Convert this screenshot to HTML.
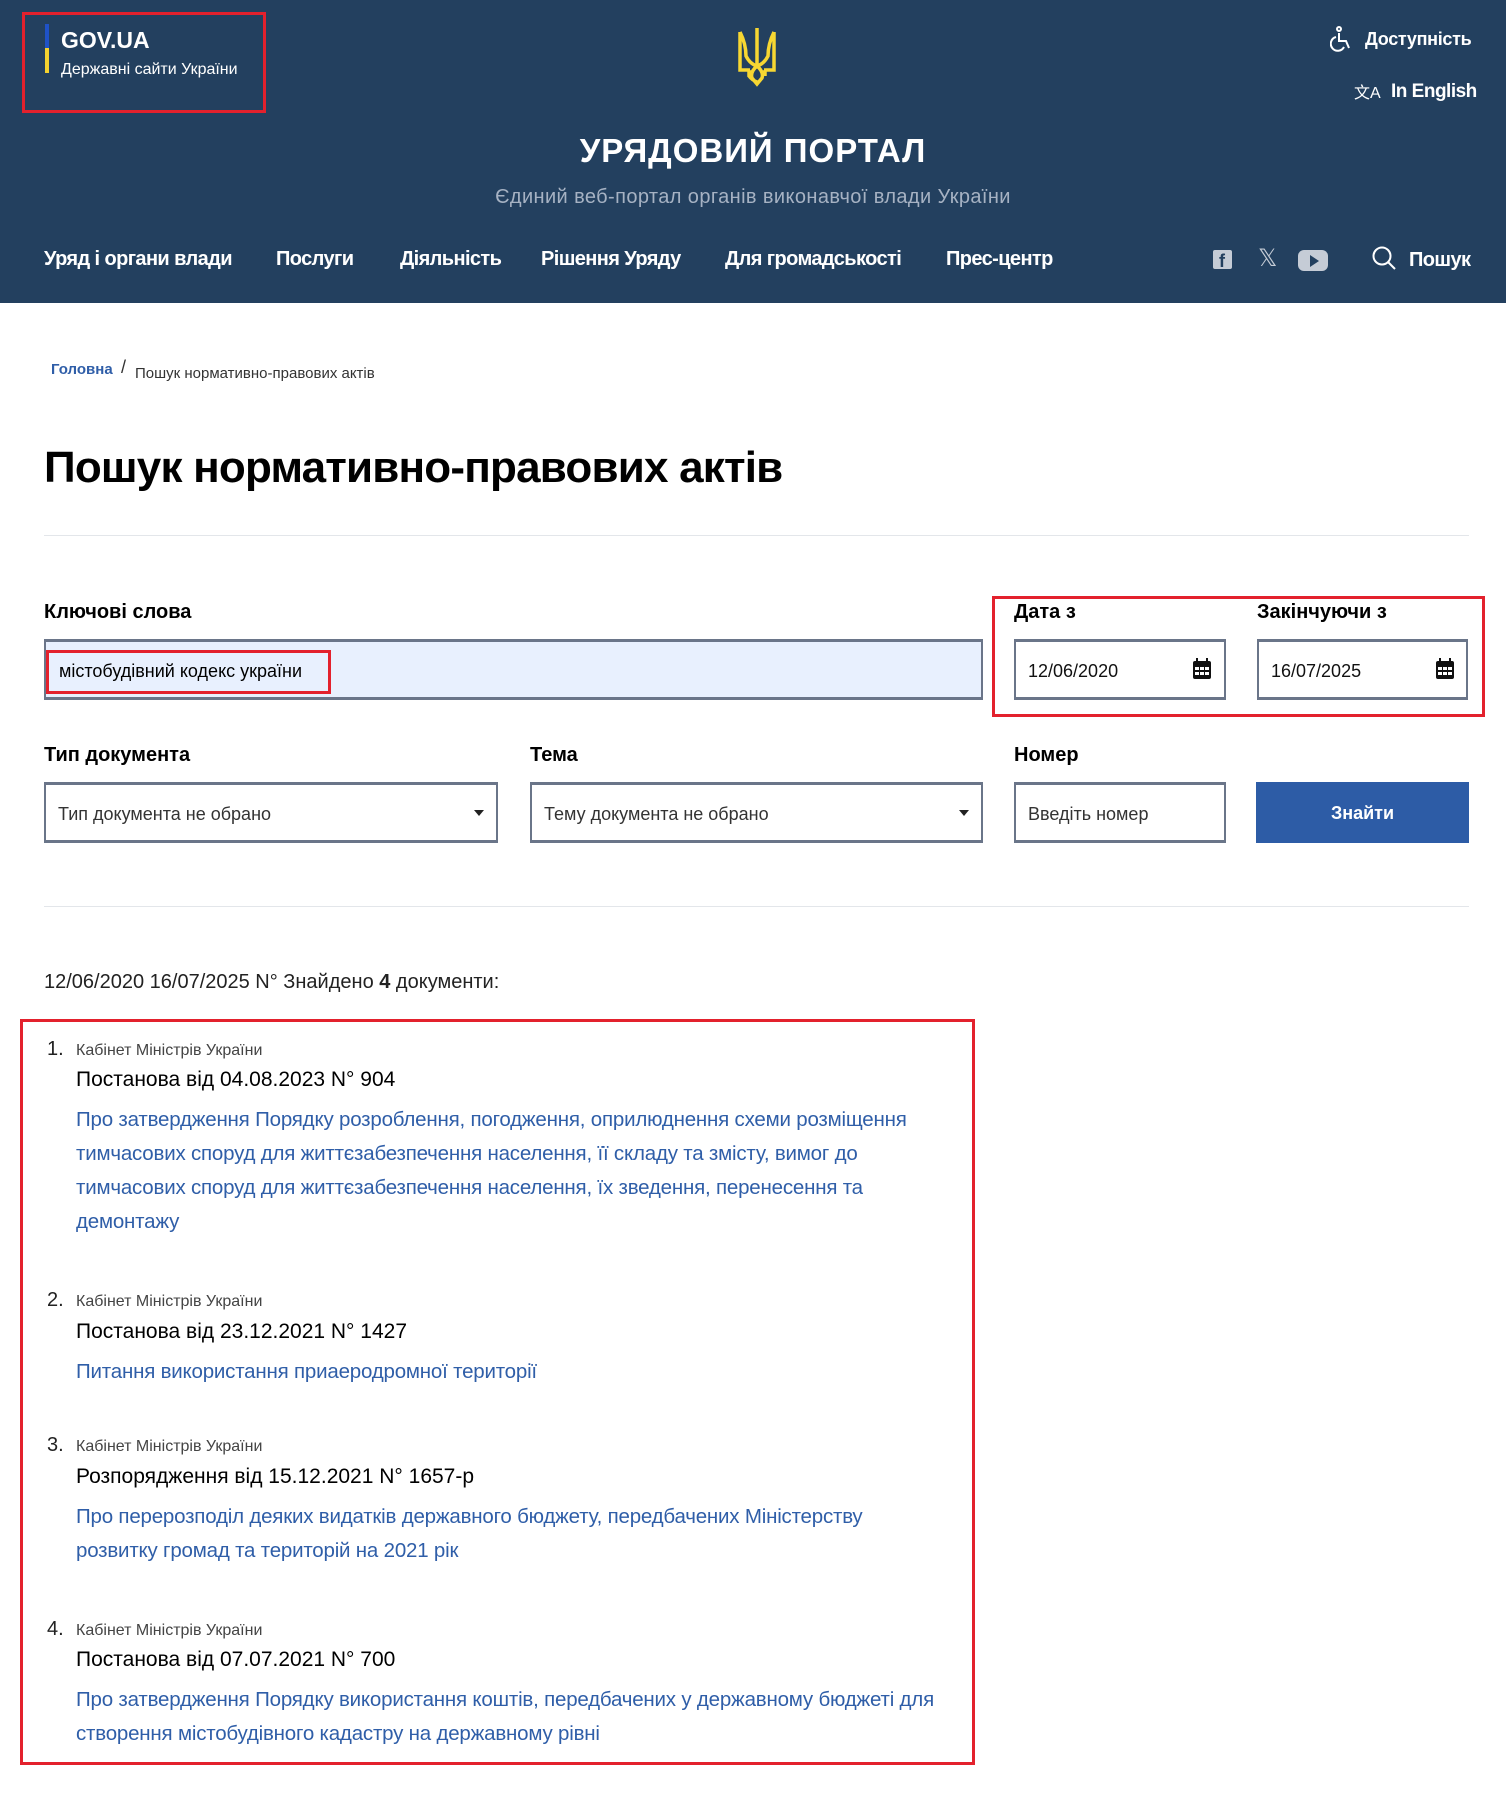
<!DOCTYPE html>
<html><head><meta charset="utf-8"><style>
*{margin:0;padding:0;box-sizing:border-box}
body{width:1506px;height:1805px;background:#fff;font-family:"Liberation Sans","DejaVu Sans",sans-serif;color:#000;position:relative;overflow:hidden}
.a{position:absolute;white-space:nowrap}
header{position:absolute;left:0;top:0;width:1506px;height:303px;background:#23405f}
.nav{top:248px;font-size:20px;font-weight:bold;color:#fff;letter-spacing:-0.6px}
.lbl{font-size:20px;font-weight:bold}
.box{position:absolute;border:2px solid #6a7589;border-top-width:3px;border-bottom-width:3px;background:#fff}
.red{position:absolute;border:3px solid #e3212d}
.ph{font-size:18px;color:#333;position:absolute;left:12px;top:19px;white-space:nowrap}
.org{font-size:16px;color:#444}
.ttl{font-size:21px;color:#000}
.lnk{font-size:20.5px;color:#2f5ea8;line-height:34px;letter-spacing:-0.2px}
.num{font-size:20px;color:#222}
</style></head><body>
<header>
<div class="red" style="left:22px;top:12px;width:244px;height:101px"></div>
<div class="a" style="left:45px;top:24px;width:4px;height:24px;background:#1f52c7"></div>
<div class="a" style="left:45px;top:48px;width:4px;height:25px;background:#f4d22f"></div>
<div class="a" style="left:61px;top:27px;font-size:23px;font-weight:bold;color:#fff">GOV.UA</div>
<div class="a" style="left:61px;top:61px;font-size:16px;color:#fff">Державні сайти України</div>
<svg class="a" style="left:736px;top:26px" width="42" height="62" viewBox="0 0 42 62" fill="none" stroke="#f7d732" stroke-width="3.5">
<path d="M21 2 L21 40 M4 6 L4 44 L14 44 M38 6 L38 44 L28 44 M4 6 Q10 18 10 30 Q14 38 21 40 Q28 38 32 30 Q32 18 38 6 M21 40 Q14 46 16 52 L21 58 L26 52 Q28 46 21 40 M13 44 L13 50 Q16 54 21 56 M29 44 L29 50"/></svg>
<svg class="a" style="left:1330px;top:26px" width="22" height="26" viewBox="0 0 22 26" fill="none" stroke="#fff" stroke-width="2"><circle cx="9" cy="3" r="2"/><path d="M9 7 L9 15 L16 15 L19 22 M6 11 A7 7 0 1 0 14 21"/></svg>
<div class="a" style="left:1365px;top:29px;font-size:18px;font-weight:bold;color:#fff;letter-spacing:-0.3px">Доступність</div>
<div class="a" style="left:1354px;top:79px;font-size:16px;color:#fff">文A</div>
<div class="a" style="left:1391px;top:81px;font-size:19px;font-weight:bold;color:#fff;letter-spacing:-0.5px">In English</div>
<div class="a" style="left:0;width:1506px;text-align:center;top:132px;font-size:33px;font-weight:bold;color:#fff;letter-spacing:1px">УРЯДОВИЙ ПОРТАЛ</div>
<div class="a" style="left:0;width:1506px;text-align:center;top:186px;font-size:20px;color:#a6b2c3;letter-spacing:0.4px">Єдиний веб-портал органів виконавчої влади України</div>
<div class="a nav" style="left:44px">Уряд і органи влади</div>
<div class="a nav" style="left:276px">Послуги</div>
<div class="a nav" style="left:400px">Діяльність</div>
<div class="a nav" style="left:541px">Рішення Уряду</div>
<div class="a nav" style="left:725px">Для громадськості</div>
<div class="a nav" style="left:946px">Прес-центр</div>
<div class="a" style="left:1213px;top:250px;width:19px;height:19px;background:#c5ccd6;border-radius:2px"></div>
<div class="a" style="left:1219px;top:251px;font-size:18px;font-weight:bold;color:#23405f">f</div>
<div class="a" style="left:1258px;top:244px;font-size:24px;color:#c5ccd6">𝕏</div>
<div class="a" style="left:1298px;top:250px;width:30px;height:21px;background:#c5ccd6;border-radius:6px"></div>
<div class="a" style="left:1310px;top:255px;width:0;height:0;border-left:9px solid #23405f;border-top:6px solid transparent;border-bottom:6px solid transparent"></div>
<svg class="a" style="left:1371px;top:245px" width="26" height="26" viewBox="0 0 26 26" fill="none" stroke="#fff" stroke-width="2"><circle cx="11" cy="11" r="8.5"/><path d="M17 17 L24 24"/></svg>
<div class="a nav" style="left:1409px;top:249px">Пошук</div>
</header>
<div class="a" style="left:51px;top:361px;font-size:15px;font-weight:bold;color:#2f5ea8">Головна</div>
<div class="a" style="left:121px;top:357px;font-size:18px;color:#333">/</div>
<div class="a" style="left:135px;top:365px;font-size:15px;color:#333">Пошук нормативно-правових актів</div>
<div class="a" style="left:44px;top:443px;font-size:44px;font-weight:bold;letter-spacing:-0.8px">Пошук нормативно-правових актів</div>
<div class="a" style="left:44px;top:535px;width:1425px;height:1px;background:#e3e6ea"></div>
<div class="a lbl" style="left:44px;top:601px">Ключові слова</div>
<div class="box" style="left:44px;top:639px;width:939px;height:61px;background:#e8f0fe"></div>
<div class="red" style="left:46px;top:650px;width:285px;height:44px"></div>
<div class="a" style="left:59px;top:661px;font-size:18px">містобудівний кодекс україни</div>
<div class="red" style="left:992px;top:596px;width:493px;height:121px"></div>
<div class="a lbl" style="left:1014px;top:601px">Дата з</div>
<div class="a lbl" style="left:1257px;top:601px">Закінчуючи з</div>
<div class="box" style="left:1014px;top:639px;width:212px;height:61px"><div class="ph" style="color:#111">12/06/2020</div></div>
<div class="box" style="left:1257px;top:639px;width:211px;height:61px"><div class="ph" style="color:#111">16/07/2025</div></div>
<svg class="a" style="left:1192px;top:658px" width="20" height="22" viewBox="0 0 20 22"><rect x="1" y="3" width="18" height="18" rx="2" fill="#111"/><path d="M5 0v5M15 0v5" stroke="#111" stroke-width="2"/><g fill="#fff"><rect x="3" y="9" width="4" height="3"/><rect x="8" y="9" width="4" height="3"/><rect x="13" y="9" width="4" height="3"/><rect x="3" y="14" width="4" height="3"/><rect x="8" y="14" width="4" height="3"/><rect x="13" y="14" width="4" height="3"/></g></svg>
<svg class="a" style="left:1435px;top:658px" width="20" height="22" viewBox="0 0 20 22"><rect x="1" y="3" width="18" height="18" rx="2" fill="#111"/><path d="M5 0v5M15 0v5" stroke="#111" stroke-width="2"/><g fill="#fff"><rect x="3" y="9" width="4" height="3"/><rect x="8" y="9" width="4" height="3"/><rect x="13" y="9" width="4" height="3"/><rect x="3" y="14" width="4" height="3"/><rect x="8" y="14" width="4" height="3"/><rect x="13" y="14" width="4" height="3"/></g></svg>
<div class="a lbl" style="left:44px;top:744px">Тип документа</div>
<div class="a lbl" style="left:530px;top:744px">Тема</div>
<div class="a lbl" style="left:1014px;top:744px">Номер</div>
<div class="box" style="left:44px;top:782px;width:454px;height:61px"><div class="ph">Тип документа не обрано</div><div class="a" style="right:12px;top:25px;border-top:6px solid #222;border-left:5px solid transparent;border-right:5px solid transparent"></div></div>
<div class="box" style="left:530px;top:782px;width:453px;height:61px"><div class="ph">Тему документа не обрано</div><div class="a" style="right:12px;top:25px;border-top:6px solid #222;border-left:5px solid transparent;border-right:5px solid transparent"></div></div>
<div class="box" style="left:1014px;top:782px;width:212px;height:61px"><div class="ph">Введіть номер</div></div>
<div class="a" style="left:1256px;top:782px;width:213px;height:61px;background:#2d5ca6;color:#fff;font-weight:bold;font-size:18px;text-align:center;line-height:63px">Знайти</div>
<div class="a" style="left:44px;top:906px;width:1425px;height:1px;background:#e3e6ea"></div>
<div class="a" style="left:44px;top:971px;font-size:20px;color:#222">12/06/2020 16/07/2025 N° Знайдено <b>4</b> документи:</div>
<div class="red" style="left:20px;top:1019px;width:955px;height:746px"></div>

<div class="a num" style="left:47px;top:1038px">1.</div>
<div class="a org" style="left:76px;top:1042px">Кабінет Міністрів України</div>
<div class="a ttl" style="left:76px;top:1068px">Постанова від 04.08.2023 N° 904</div>
<div class="a lnk" style="left:76px;top:1103px">Про затвердження Порядку розроблення, погодження, оприлюднення схеми розміщення<br>тимчасових споруд для життєзабезпечення населення, її складу та змісту, вимог до<br>тимчасових споруд для життєзабезпечення населення, їх зведення, перенесення та<br>демонтажу</div>

<div class="a num" style="left:47px;top:1289px">2.</div>
<div class="a org" style="left:76px;top:1293px">Кабінет Міністрів України</div>
<div class="a ttl" style="left:76px;top:1320px">Постанова від 23.12.2021 N° 1427</div>
<div class="a lnk" style="left:76px;top:1355px">Питання використання приаеродромної території</div>

<div class="a num" style="left:47px;top:1434px">3.</div>
<div class="a org" style="left:76px;top:1438px">Кабінет Міністрів України</div>
<div class="a ttl" style="left:76px;top:1465px">Розпорядження від 15.12.2021 N° 1657-р</div>
<div class="a lnk" style="left:76px;top:1500px">Про перерозподіл деяких видатків державного бюджету, передбачених Міністерству<br>розвитку громад та територій на 2021 рік</div>

<div class="a num" style="left:47px;top:1618px">4.</div>
<div class="a org" style="left:76px;top:1622px">Кабінет Міністрів України</div>
<div class="a ttl" style="left:76px;top:1648px">Постанова від 07.07.2021 N° 700</div>
<div class="a lnk" style="left:76px;top:1683px">Про затвердження Порядку використання коштів, передбачених у державному бюджеті для<br>створення містобудівного кадастру на державному рівні</div>
</body></html>
